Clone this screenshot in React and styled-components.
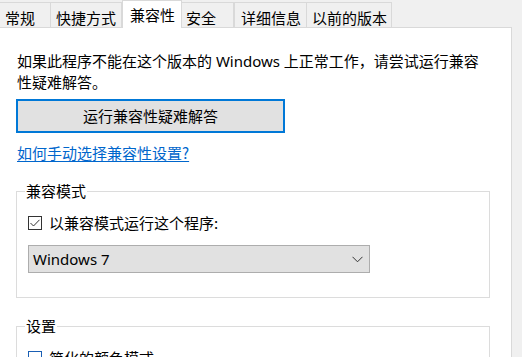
import React from "react";
import styled, { createGlobalStyle } from "styled-components";

const GlobalStyle = createGlobalStyle`
  html, body { margin: 0; padding: 0; background: #f0f0f0; }
  body {
    font-family: "Noto Sans", "Noto Sans CJK SC", sans-serif;
    font-size: 15px;
    color: #000;
    overflow: hidden;
  }
  * { box-sizing: border-box; }
`;

const Window = styled.div`
  width: 522px;
  height: 357px;
  overflow: hidden;
  background: #f0f0f0;
  display: flex;
  flex-direction: column;
`;

const TabStrip = styled.div`
  display: flex;
  align-items: flex-end;
  height: 31px;
  margin-left: -1px;
  position: relative;
  z-index: 1;
`;

const Tab = styled.div`
  width: ${(p) => p.$w}px;
  height: ${(p) => (p.$active ? 28 : 25)}px;
  margin-bottom: ${(p) => (p.$active ? 0 : 1)}px;
  padding-left: ${(p) => p.$pl}px;
  padding-top: ${(p) => (p.$active ? 5 : 6)}px;
  line-height: 18px;
  white-space: nowrap;
  font-family: "Noto Sans CJK SC", sans-serif;
  background: ${(p) => (p.$active ? "#ffffff" : "#f0f0f0")};
  border: 1px solid #d9d9d9;
  border-bottom: none;
  border-left: ${(p) => (p.$noLeft ? "none" : "1px solid #d9d9d9")};
`;

const Panel = styled.div`
  width: 513px;
  margin-left: -1px;
  margin-top: -1px;
  flex: 1;
  background: #ffffff;
  border: 1px solid #d9d9d9;
  padding: 23px 0 0 17px;
  display: flex;
  flex-direction: column;
  align-items: flex-start;
`;

const Description = styled.p`
  margin: 0;
  width: 470px;
  line-height: 21px;
  font-family: "Noto Sans", "Noto Sans CJK SC", sans-serif;
`;

const TroubleButton = styled.button`
  margin-top: 6px;
  margin-left: -1px;
  width: 269px;
  height: 34px;
  background: #e1e1e1;
  border: 2px solid #0078d7;
  font-family: "Noto Sans CJK SC", sans-serif;
  font-size: 15px;
  color: #000;
  padding: 0;
  line-height: 20px;
`;

const HelpLink = styled.a`
  margin-top: 10px;
  color: #0066cc;
  text-decoration: underline;
  text-underline-offset: 2px;
  line-height: 20px;
  font-family: "Noto Sans CJK SC", sans-serif;
  cursor: pointer;
`;

const GroupBox = styled.fieldset`
  margin: ${(p) => p.$mt}px 0 0 -1px;
  width: 474px;
  border: 1px solid #dcdcdc;
  padding: 0 0 ${(p) => p.$pb}px 11px;
  min-width: 0;
`;

const Legend = styled.legend`
  padding: 0 1px;
  margin-left: -3px;
  line-height: 20px;
  font-family: "Noto Sans CJK SC", sans-serif;
`;

const CheckRow = styled.label`
  display: flex;
  align-items: center;
  gap: 7px;
  height: 20px;
  margin-top: 12px;
  line-height: 20px;
  font-family: "Noto Sans CJK SC", sans-serif;
`;

const Box = styled.span`
  width: 14px;
  height: 14px;
  border: 1px solid ${(p) => (p.$focus ? "#1a5fb4" : "#333333")};
  background: #fff;
  display: flex;
  align-items: center;
  justify-content: center;
  flex-shrink: 0;
`;

const Select = styled.div`
  margin-top: 12px;
  width: 342px;
  height: 28px;
  background: #e1e1e1;
  border: 1px solid #adadad;
  display: flex;
  align-items: center;
  justify-content: space-between;
  padding: 0 6px 0 4px;
  font-family: "Noto Sans", sans-serif;
  font-size: 15px;
`;

const tabs = [
  { t: "常规", w: 52, pl: 5 },
  { t: "快捷方式", w: 71, pl: 5, noLeft: true },
  { t: "兼容性", w: 60, pl: 7, active: true, noLeft: false },
  { t: "安全", w: 52, pl: 4, noLeft: true },
  { t: "详细信息", w: 73, pl: 6 },
  { t: "以前的版本", w: 85, pl: 5, noLeft: true },
];

export default function App() {
  return (
    <>
      <GlobalStyle />
      <Window>
        <TabStrip>
          {tabs.map((tb) => (
            <Tab key={tb.t} $w={tb.w} $pl={tb.pl} $active={tb.active} $noLeft={tb.noLeft}>
              {tb.t}
            </Tab>
          ))}
        </TabStrip>
        <Panel>
          <Description>
            如果此程序不能在这个版本的 Windows 上正常工作，请尝试运行兼容性疑难解答。
          </Description>
          <TroubleButton>运行兼容性疑难解答</TroubleButton>
          <HelpLink>如何手动选择兼容性设置?</HelpLink>
          <GroupBox $mt={18} $pb={24}>
            <Legend>兼容模式</Legend>
            <CheckRow>
              <Box>
                <svg width="12" height="12" viewBox="0 0 12 12">
                  <path d="M1.5 6 L4.5 9 L10.5 2.8" fill="none" stroke="#333" strokeWidth="1" />
                </svg>
              </Box>
              以兼容模式运行这个程序:
            </CheckRow>
            <Select>
              <span>Windows 7</span>
              <svg width="11" height="7" viewBox="0 0 11 7">
                <path d="M0.5 0.8 L5.5 5.8 L10.5 0.8" fill="none" stroke="#333" strokeWidth="1" />
              </svg>
            </Select>
          </GroupBox>
          <GroupBox $mt={18} $pb={20}>
            <Legend>设置</Legend>
            <CheckRow>
              <Box $focus />
              简化的颜色模式
            </CheckRow>
          </GroupBox>
        </Panel>
      </Window>
    </>
  );
}
